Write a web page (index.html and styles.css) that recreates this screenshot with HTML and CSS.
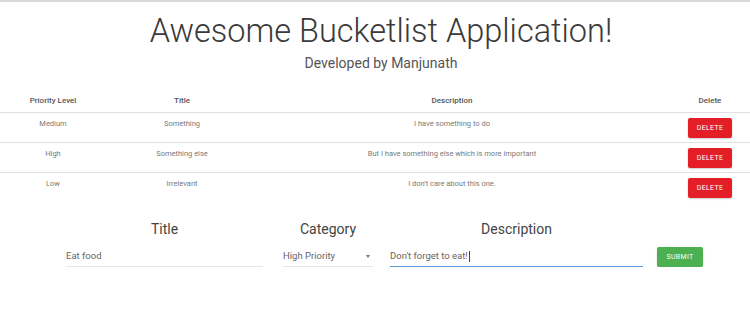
FILE: index.html
```html
<!DOCTYPE html>
<html lang="en">
<head>
    <meta charset="UTF-8">
    <meta name="viewport" content="width=device-width, initial-scale=1.0">
    <title>Bucketlist</title>
    <link rel="stylesheet" href="styles.css">
</head>
<body>
    <header class="hero">
        <h1 class="hero-title">Awesome Bucketlist Application!</h1>
        <p class="hero-sub">Developed by Manjunath</p>
    </header>

    <table class="list">
        <colgroup>
            <col class="col-priority">
            <col class="col-title">
            <col class="col-desc">
            <col class="col-delete">
        </colgroup>
        <thead>
            <tr>
                <th>Priority Level</th>
                <th>Title</th>
                <th>Description</th>
                <th class="cell-delete"><span class="delete-slot">Delete</span></th>
            </tr>
        </thead>
        <tbody>
            <tr>
                <td>Medium</td>
                <td>Something</td>
                <td>I have something to do</td>
                <td class="cell-delete"><button class="btn btn-delete">Delete</button></td>
            </tr>
            <tr>
                <td>High</td>
                <td>Something else</td>
                <td>But I have something else which is more important</td>
                <td class="cell-delete"><button class="btn btn-delete">Delete</button></td>
            </tr>
            <tr>
                <td>Low</td>
                <td>Irrelevant</td>
                <td>I don't care about this one.</td>
                <td class="cell-delete"><button class="btn btn-delete">Delete</button></td>
            </tr>
        </tbody>
    </table>

    <form class="add-form">
        <div class="field field-title">
            <label class="field-label">Title</label>
            <div class="field-input">Eat food</div>
        </div>
        <div class="field field-category">
            <label class="field-label">Category</label>
            <div class="field-input field-select">
                <span>High Priority</span>
                <span class="select-arrow"></span>
            </div>
        </div>
        <div class="field field-desc">
            <label class="field-label">Description</label>
            <div class="field-input is-focused">Don't forget to eat!<span class="caret"></span></div>
        </div>
        <button class="btn btn-submit" type="button">Submit</button>
    </form>
</body>
</html>
```

FILE: styles.css
```css
body {
    margin: 0;
    border-top: 2px solid #d9d9d9;
    font-family: 'Roboto', 'Noto Sans', sans-serif;
    background: #fff;
}

.hero {
    padding-left: 12px;
    text-align: center;
}
.hero-title {
    margin: 10px 0 0;
    font-size: 32.5px;
    font-weight: 300;
    line-height: 38px;
    color: #3a3a3a;
}
.hero-sub {
    margin: 4px 0 0;
    font-size: 14px;
    line-height: 18px;
    color: #555;
}

/* table */
.list {
    width: 100%;
    margin-top: 17px;
    border-collapse: collapse;
    table-layout: fixed;
}
.col-priority { width: 106px; }
.col-title { width: 152px; }
.col-desc { width: 388px; }
.col-delete { width: 104px; }

.list th {
    padding: 6px 0 5px;
    font-size: 8px;
    font-weight: 500;
    line-height: 12px;
    color: #555;
    text-align: center;
    border-bottom: 1px solid #e0e0e0;
}
.list td {
    padding: 5px 0 4px;
    font-size: 7.5px;
    line-height: 12px;
    color: #7a7a7a;
    text-align: center;
    vertical-align: top;
    border-bottom: 1px solid #e0e0e0;
}
.list tbody tr:last-child td {
    border-bottom: none;
}
.list .cell-delete {
    padding-left: 24px;
}
.delete-slot {
    display: inline-block;
    width: 44px;
}

.btn {
    border: none;
    border-radius: 2px;
    color: #fff;
    font-family: inherit;
    font-weight: 400;
    text-transform: uppercase;
    letter-spacing: 0.3px;
    padding: 0;
    cursor: pointer;
    box-shadow: 0 1px 2px rgba(0,0,0,0.2);
}
.btn-delete {
    display: block;
    width: 44px;
    height: 20px;
    margin: 0 auto;
    font-size: 7px;
    background: #e41e26;
}

/* form */
.add-form {
    display: flex;
    align-items: flex-end;
    margin-top: 18px;
    padding-left: 66px;
}
.field-label {
    display: block;
    margin-bottom: 8px;
    font-size: 14px;
    line-height: 18px;
    color: #444;
    text-align: center;
}
.field-input {
    height: 20px;
    line-height: 20px;
    font-size: 9.5px;
    color: #666;
    border-bottom: 1px solid #e6e6e6;
    white-space: nowrap;
}
.field-title {
    width: 197px;
    margin-right: 20px;
}
.field-category {
    width: 90px;
    margin-right: 17px;
}
.field-desc {
    width: 253px;
    margin-right: 14px;
}
.field-select {
    display: flex;
    align-items: center;
    justify-content: space-between;
}
.select-arrow {
    width: 0;
    height: 0;
    margin-right: 3px;
    border-left: 2.5px solid transparent;
    border-right: 2.5px solid transparent;
    border-top: 3px solid #777;
}
.is-focused {
    border-bottom-color: #5c9ad6;
    box-shadow: 0 1px 0 0 #5c9ad6;
}
.caret {
    display: inline-block;
    width: 1px;
    height: 11px;
    margin-left: 1px;
    vertical-align: middle;
    background: #444;
}
.btn-submit {
    width: 46px;
    height: 20px;
    font-size: 7px;
    background: #4caf50;
}
```
